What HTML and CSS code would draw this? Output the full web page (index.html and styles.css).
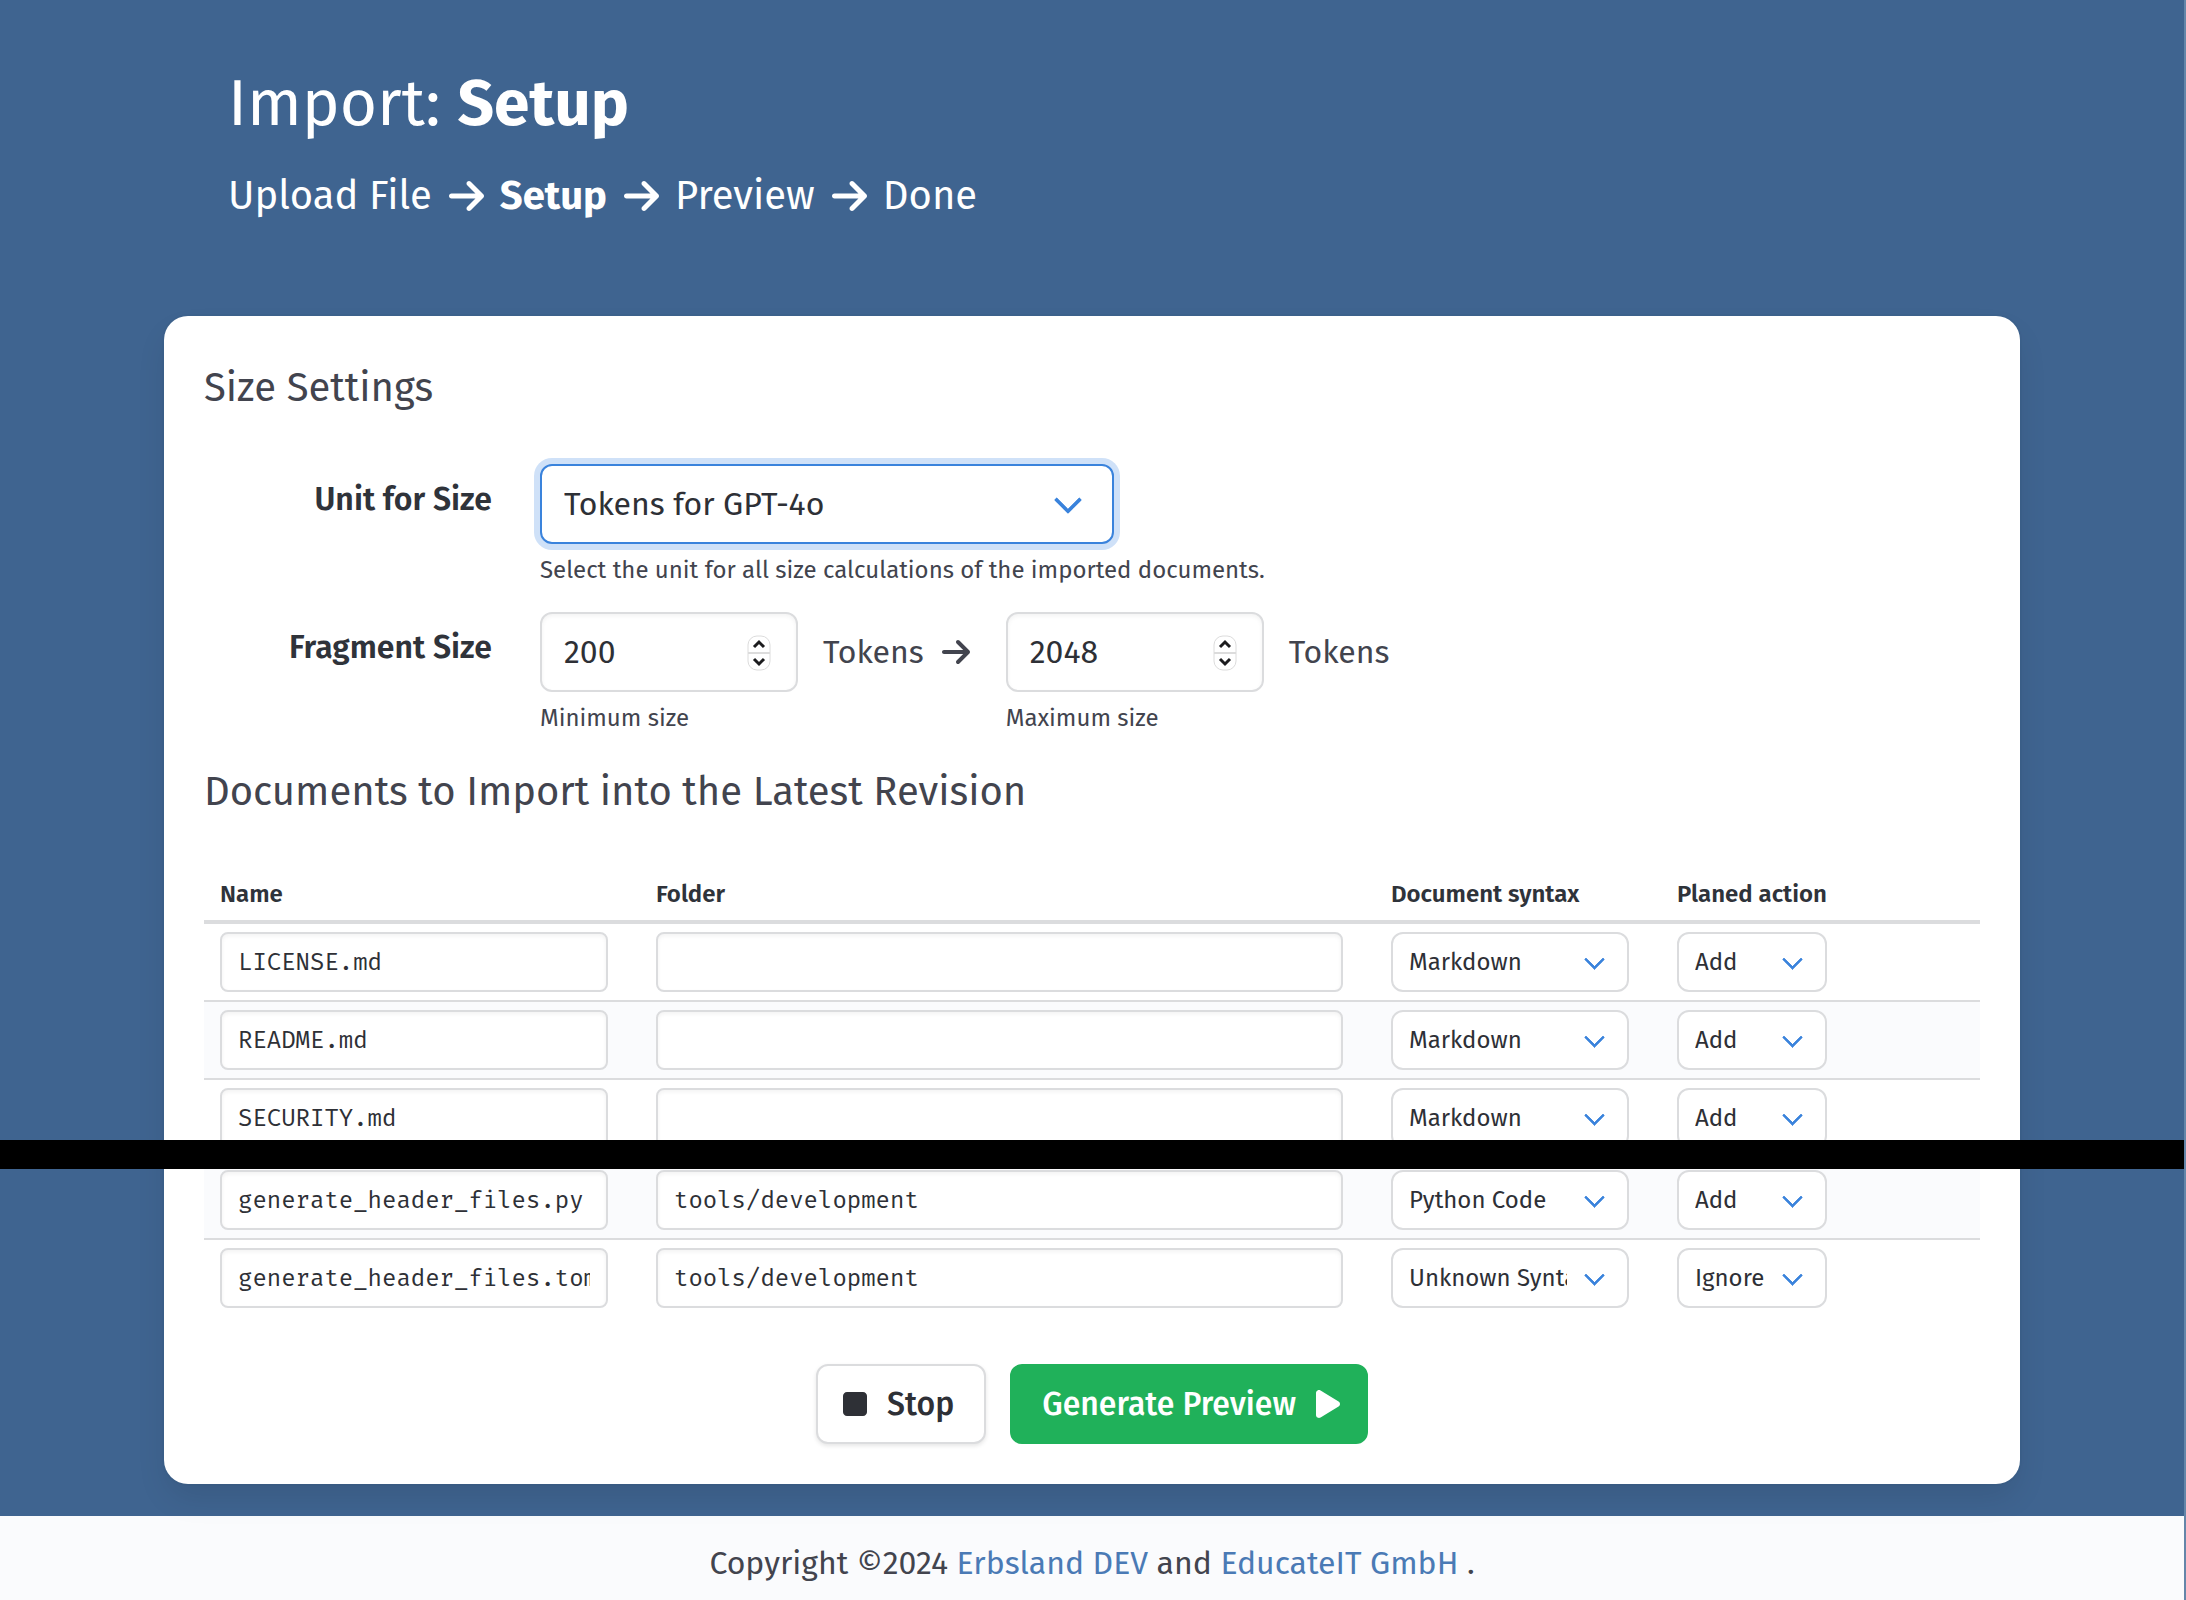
FILE: index.html
```html
<!DOCTYPE html>
<html lang="en">
<head>
<meta charset="utf-8">
<meta name="viewport" content="width=device-width, initial-scale=1">
<title>Import: Setup</title>
<link rel="stylesheet" href="styles.css">
</head>
<body>
<svg class="sprite" aria-hidden="true">
  <symbol id="arrow" viewBox="0 0 448 512"><path d="M438.600 278.600c12.500-12.500 12.500-32.800 0-45.300l-160-160c-12.500-12.500-32.800-12.500-45.300 0s-12.500 32.800 0 45.300L338.800 224 32 224c-17.700 0-32 14.300-32 32s14.300 32 32 32l306.700 0L233.400 393.400c-12.500 12.500-12.500 32.800 0 45.300s32.800 12.500 45.300 0l160-160z"/></symbol>
  <symbol id="stop" viewBox="0 0 384 512"><path d="M0 128C0 92.700 28.700 64 64 64H320c35.300 0 64 28.700 64 64V384c0 35.300-28.700 64-64 64H64c-35.300 0-64-28.700-64-64V128z"/></symbol>
  <symbol id="play" viewBox="0 0 384 512"><path d="M73 39c-14.800-9.100-33.400-9.400-48.500-.9S0 62.600 0 80L0 432c0 17.400 9.400 33.400 24.500 41.900s33.700 8.100 48.500-.9L361 297c14.300-8.700 23-24.200 23-41s-8.700-32.200-23-41L73 39z"/></symbol>
  <symbol id="stepper" viewBox="0 0 24 36"><rect class="stepper-box" x="1" y="1" width="22" height="34" rx="9"/><path class="stepper-rule" d="M1 18H23"/><path class="stepper-mark" d="M7 12l5-5 5 5M7 24l5 5 5-5"/></symbol>
</svg>

<header class="hero">
  <h1 class="title">Import: <strong>Setup</strong></h1>
  <ol class="steps">
    <li>Upload File</li>
    <li><svg class="icon-step" aria-hidden="true"><use href="#arrow"/></svg><strong>Setup</strong></li>
    <li><svg class="icon-step" aria-hidden="true"><use href="#arrow"/></svg>Preview</li>
    <li><svg class="icon-step" aria-hidden="true"><use href="#arrow"/></svg>Done</li>
  </ol>
</header>

<main class="page">
  <form class="card">
    <h2 class="heading">Size Settings</h2>

    <div class="field-row">
      <label class="label" for="unit">Unit for Size</label>
      <div class="field">
        <div class="select select-unit is-focused">
          <select id="unit"><option>Tokens for GPT-4o</option></select>
        </div>
        <p class="help">Select the unit for all size calculations of the imported documents.</p>
      </div>
    </div>

    <div class="field-row">
      <label class="label" for="min">Fragment Size</label>
      <div class="sizes">
        <div class="field">
          <div class="number"><input id="min" type="number" value="200"><svg class="stepper" aria-hidden="true"><use href="#stepper"/></svg></div>
          <p class="help">Minimum size</p>
        </div>
        <span class="unit unit-between">Tokens <svg class="icon-arrow" aria-hidden="true"><use href="#arrow"/></svg></span>
        <div class="field">
          <div class="number"><input id="max" type="number" value="2048" aria-label="Maximum size"><svg class="stepper" aria-hidden="true"><use href="#stepper"/></svg></div>
          <p class="help">Maximum size</p>
        </div>
        <span class="unit">Tokens</span>
      </div>
    </div>

    <h2 class="heading heading-documents">Documents to Import into the Latest Revision</h2>

    <table class="table">
      <colgroup><col class="col-name"><col><col class="col-syntax"><col class="col-action"></colgroup>
      <thead>
        <tr><th>Name</th><th>Folder</th><th>Document syntax</th><th>Planed action</th></tr>
      </thead>
      <tbody>
        <tr>
          <td><input class="text" type="text" aria-label="Name" value="LICENSE.md"></td>
          <td><input class="text" type="text" aria-label="Folder" value=""></td>
          <td><div class="select is-small"><select aria-label="Document syntax"><option>Markdown</option></select></div></td>
          <td><div class="select is-small select-action"><select aria-label="Planed action"><option>Add</option></select></div></td>
        </tr>
        <tr class="is-striped">
          <td><input class="text" type="text" aria-label="Name" value="README.md"></td>
          <td><input class="text" type="text" aria-label="Folder" value=""></td>
          <td><div class="select is-small"><select aria-label="Document syntax"><option>Markdown</option></select></div></td>
          <td><div class="select is-small select-action"><select aria-label="Planed action"><option>Add</option></select></div></td>
        </tr>
        <tr>
          <td><input class="text" type="text" aria-label="Name" value="SECURITY.md"></td>
          <td><input class="text" type="text" aria-label="Folder" value=""></td>
          <td><div class="select is-small"><select aria-label="Document syntax"><option>Markdown</option></select></div></td>
          <td><div class="select is-small select-action"><select aria-label="Planed action"><option>Add</option></select></div></td>
        </tr>
        <tr class="break"><td colspan="4"><div class="break-bar"></div></td></tr>
        <tr class="is-striped">
          <td><input class="text" type="text" aria-label="Name" value="generate_header_files.py"></td>
          <td><input class="text" type="text" aria-label="Folder" value="tools/development"></td>
          <td><div class="select is-small"><select aria-label="Document syntax"><option>Python Code</option></select></div></td>
          <td><div class="select is-small select-action"><select aria-label="Planed action"><option>Add</option></select></div></td>
        </tr>
        <tr>
          <td><input class="text" type="text" aria-label="Name" value="generate_header_files.toml"></td>
          <td><input class="text" type="text" aria-label="Folder" value="tools/development"></td>
          <td><div class="select is-small"><select aria-label="Document syntax"><option>Unknown Syntax</option></select></div></td>
          <td><div class="select is-small select-action"><select aria-label="Planed action"><option>Ignore</option></select></div></td>
        </tr>
      </tbody>
    </table>

    <div class="buttons">
      <button class="button" type="button"><svg class="icon-button" aria-hidden="true"><use href="#stop"/></svg>Stop</button>
      <button class="button is-success" type="button">Generate Preview<svg class="icon-button" aria-hidden="true"><use href="#play"/></svg></button>
    </div>
  </form>
</main>

<footer class="footer">
  <p>Copyright ©2024 <a href="#">Erbsland DEV</a> and <a href="#">EducateIT GmbH</a> .</p>
</footer>
</body>
</html>
```
FILE: styles.css
```css
*, *::before, *::after { box-sizing: border-box; }

body {
  margin: 0;
  min-height: 100vh;
  display: flex;
  flex-direction: column;
  border-right: 2px solid #6486a9;
  background: #3f6490;
  color: #42444e;
  font-family: "Fira Sans", "Noto Sans", sans-serif;
  font-size: 32px;
  line-height: 48px;
}

h1, h2, p, ol { margin: 0; padding: 0; font-weight: 400; }
svg { fill: currentColor; flex: none; }
.sprite { position: absolute; width: 0; height: 0; }

.hero, .card { width: calc(100% - 48px); max-width: 1856px; margin: 0 auto; }

.hero { padding: 64px 64px 82px; color: #fff; }
.title { font-size: 64px; line-height: 80px; }
.title strong { font-weight: 700; }
.steps {
  display: flex;
  flex-wrap: wrap;
  gap: 17px;
  margin-top: 22px;
  list-style: none;
  font-size: 40px;
  line-height: 60px;
}
.steps li { display: flex; align-items: center; gap: 16px; }
.icon-step { width: 35px; height: 40px; }

.page { position: relative; padding-bottom: 32px; flex: 1; }
.card {
  padding: 40px;
  margin-top: 8px;
  border-radius: 24px;
  background: #fff;
  box-shadow: 0 16px 32px -4px rgba(10, 10, 10, .1), 0 0 0 2px rgba(10, 10, 10, .02);
}

.heading { padding-top: 2px; font-size: 40px; line-height: 60px; }
.heading-documents { margin-top: 24px; margin-bottom: 46px; }

.field-row {
  display: grid;
  grid-template-columns: 288px 1fr;
  gap: 48px;
}
.heading + .field-row { margin-top: 46px; }
.field-row + .field-row { margin-top: 24px; }
.label {
  padding-top: 11px;
  color: #2f333a;
  font-weight: 600;
  text-align: right;
}
.help { margin-top: 8px; font-size: 24px; line-height: 36px; }
.sizes { display: flex; gap: 25px; }
.unit { display: flex; align-items: center; gap: 18px; height: 80px; }
.unit-between { padding-right: 11px; }
.icon-arrow { width: 28px; height: 32px; }

input, select, .button {
  border: 2px solid #dbdcde;
  border-radius: 12px;
  background: #fff;
  color: #2e3036;
  font: inherit;
}
input, select { width: 100%; outline: 0; }

.select { position: relative; }
.select select {
  display: block;
  height: 80px;
  padding: 0 76px 0 22px;
  appearance: none;
}
.select::after {
  content: "";
  position: absolute;
  top: 50%;
  right: 36px;
  width: 20px;
  height: 20px;
  margin-top: -14px;
  border: solid #3a83dc;
  border-width: 0 0 4px 4px;
  border-radius: 1px;
  transform: rotate(-45deg);
  pointer-events: none;
}
.select-unit { max-width: 574px; }
.is-focused select { border-color: #3a83dc; box-shadow: 0 0 0 6px #cfe1f8; }

.select.is-small { font-size: 24px; }
.is-small select { height: 60px; padding: 0 60px 0 16px; }
.select.is-small::after {
  right: 27px;
  width: 15px;
  height: 15px;
  margin-top: -10px;
  border-width: 0 0 3px 3px;
}
.select-action { width: 150px; }

.number { position: relative; width: 258px; }
.number input {
  display: block;
  height: 80px;
  padding: 0 22px;
  appearance: textfield;
  box-shadow: inset 0 2px 4px rgba(10, 10, 10, .05);
}
.number input::-webkit-inner-spin-button { display: none; }
.stepper { position: absolute; top: 23px; right: 27px; width: 24px; height: 36px; }
.stepper-box { fill: #fff; stroke: #dcdcdc; stroke-width: 1; }
.stepper-rule { stroke: #dcdcdc; stroke-width: 2; }
.stepper-mark { fill: none; stroke: #1c1c1e; stroke-width: 3; }

.table { width: 100%; table-layout: fixed; border-collapse: separate; border-spacing: 0; }
.col-name { width: 436px; }
.col-syntax { width: 286px; }
.col-action { width: 319px; }
.table th {
  padding: 8px 16px;
  border-bottom: 4px solid #dbdcde;
  color: #2f333a;
  font-size: 24px;
  line-height: 36px;
  font-weight: 600;
  text-align: left;
}
.table td { padding: 8px 32px 8px 16px; border-bottom: 2px solid #dbdcde; }
.table tr:last-child td { border-bottom: 0; }
.is-striped td { background: #fafbfd; }
.table .break td { height: 4px; padding: 0; border: 0; line-height: 0; }
.break-bar {
  position: absolute;
  left: 0;
  right: -2px;
  height: 29px;
  margin-top: -20px;
  background: #000;
}
.text {
  display: block;
  height: 60px;
  padding: 0 16px;
  border-radius: 8px;
  box-shadow: inset 0 2px 4px rgba(10, 10, 10, .05);
  font-family: "Fira Mono", "Liberation Mono", monospace;
  font-size: 24px;
}

.buttons { display: flex; justify-content: center; gap: 24px; margin-top: 48px; }
.button {
  display: flex;
  align-items: center;
  gap: 20px;
  height: 80px;
  padding: 0 30px 0 25px;
  box-shadow: 0 2px 4px rgba(10, 10, 10, .1);
  font-weight: 500;
}
.button.is-success {
  padding: 0 26px 0 30px;
  border-color: #20b15a;
  background: #20b15a;
  box-shadow: none;
  color: #fff;
}
.icon-button { width: 24px; height: 32px; }

.footer { padding: 23px 24px 13px; background: #fafbfd; text-align: center; }
.footer a { color: #4a7ab5; text-decoration: none; }
```
